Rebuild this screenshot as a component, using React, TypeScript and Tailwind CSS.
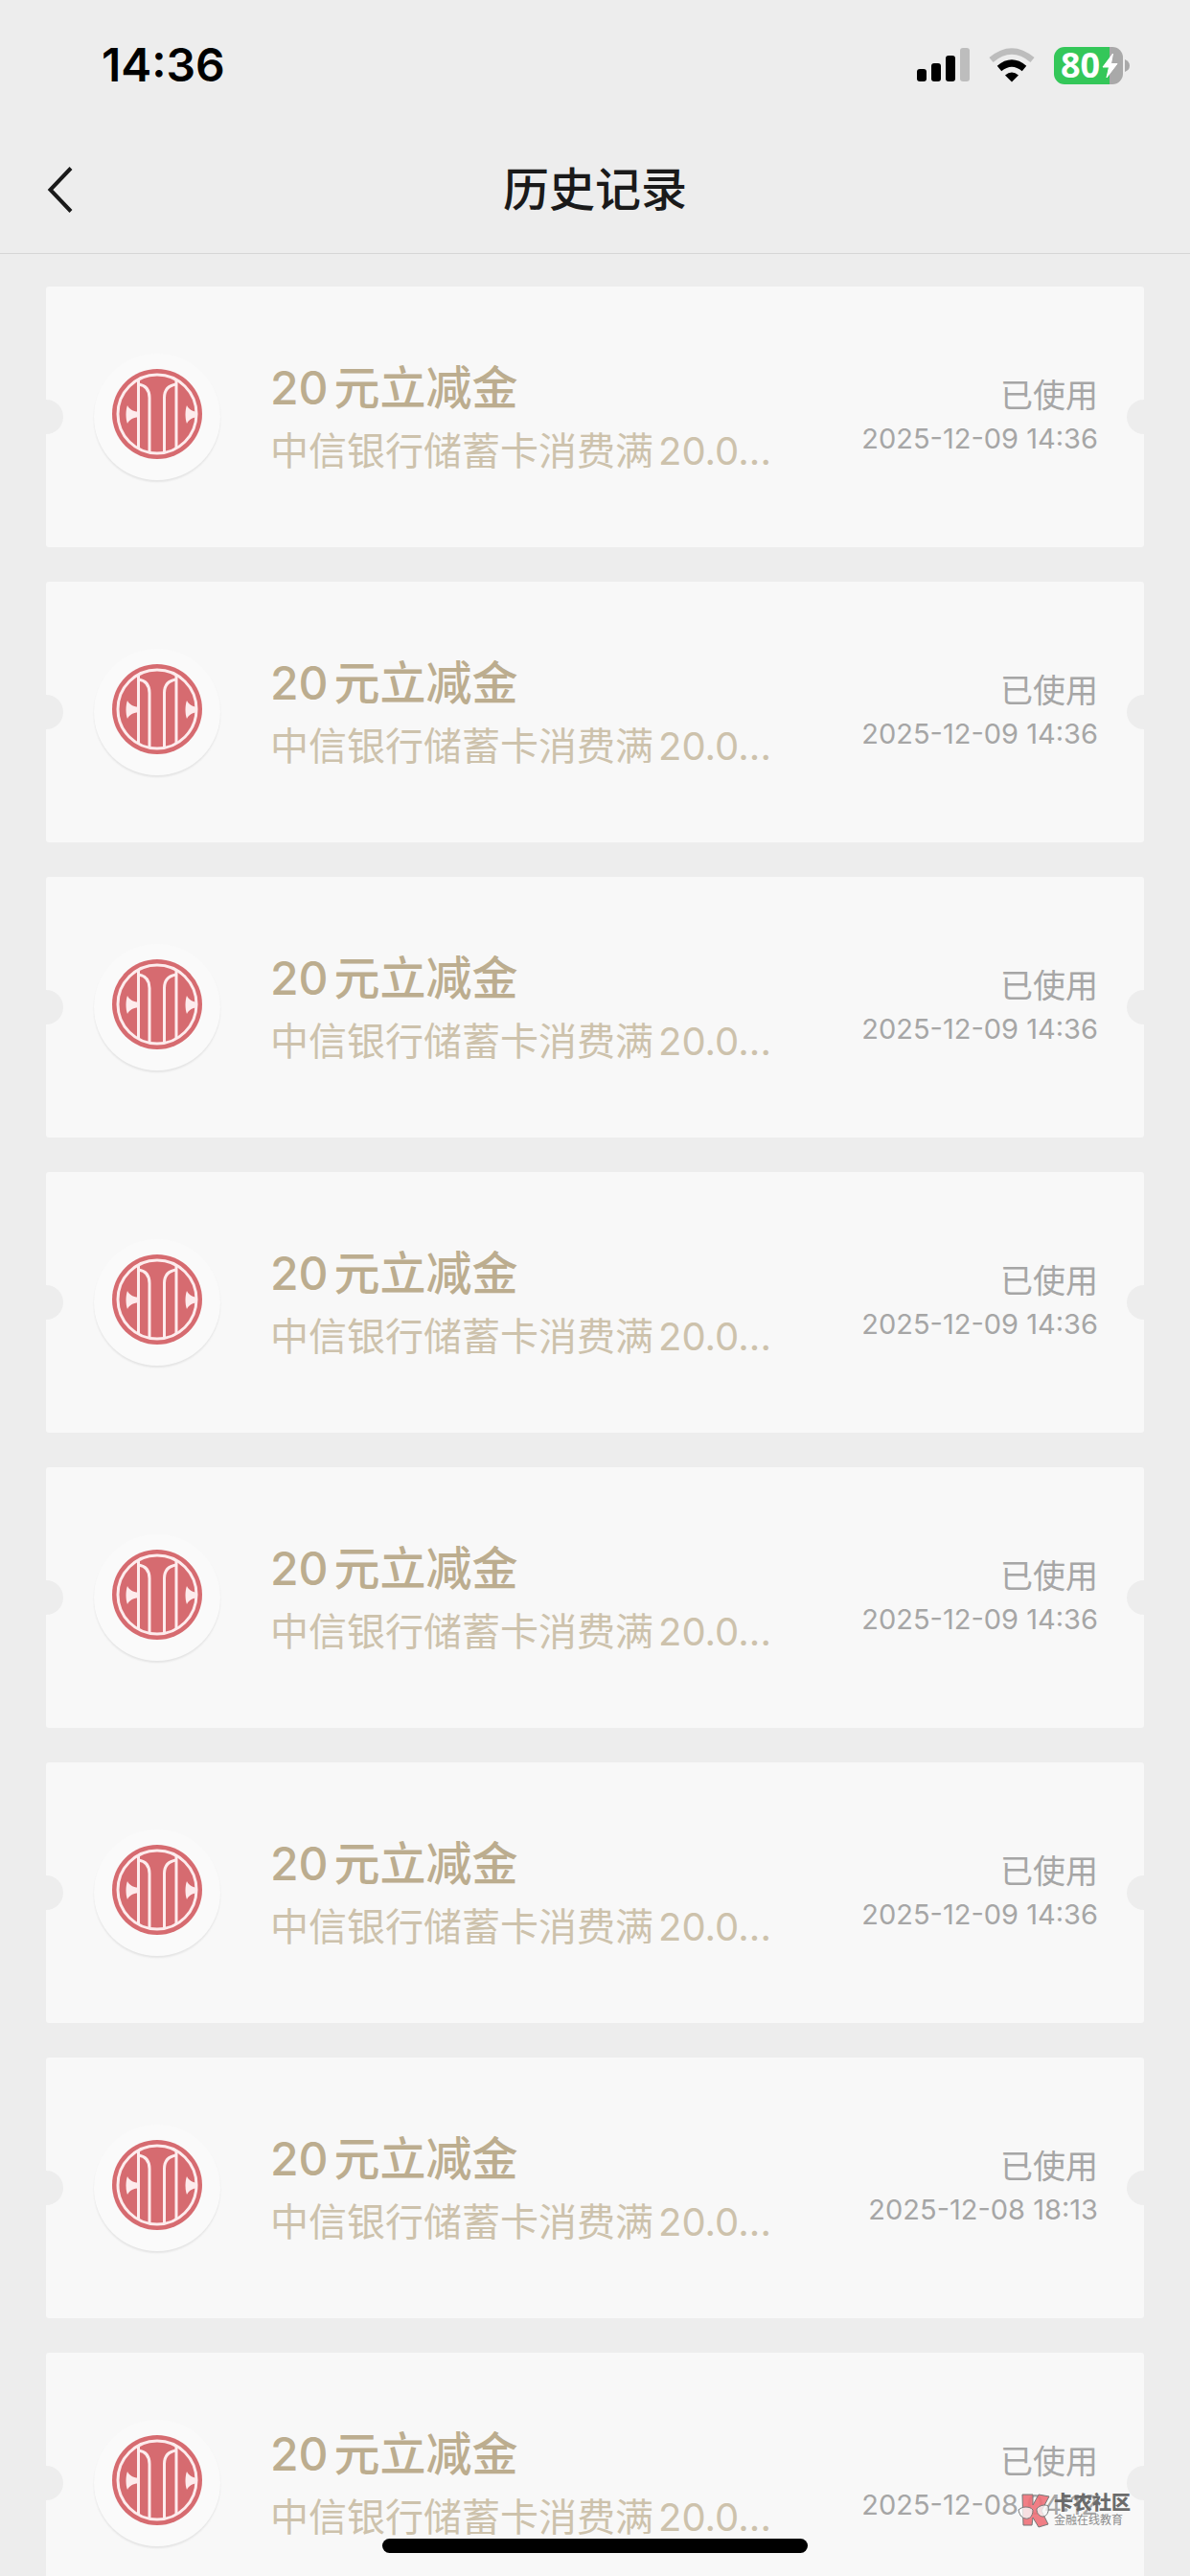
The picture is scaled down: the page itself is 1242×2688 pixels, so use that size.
import React from 'react';

interface Coupon {
    id: number;
    title: string;
    description: string;
    status: string;
    usedAt: string;
}

const usedDates = [
    '2025-12-09 14:36',
    '2025-12-09 14:36',
    '2025-12-09 14:36',
    '2025-12-09 14:36',
    '2025-12-09 14:36',
    '2025-12-09 14:36',
    '2025-12-08 18:13',
    '2025-12-08 04:12',
];

const coupons: Coupon[] = usedDates.map((usedAt, id) => ({
    id,
    title: '20元立减金',
    description: '中信银行储蓄卡消费满20.0...',
    status: '已使用',
    usedAt,
}));

// --- Status bar ---
const StatusBar = () => (
    <div className="flex h-[132px] shrink-0 items-center justify-between pl-[106px] pr-[63px] pt-1">
        <span className="text-[48px] font-semibold leading-none text-black">14:36</span>
        <div className="flex items-center">
            <svg className="h-[36px] w-[56px]" viewBox="0 0 56 36" aria-hidden="true">
                <rect x="0" y="22" width="10" height="13" rx="3" />
                <rect x="15" y="16" width="10" height="19" rx="3" />
                <rect x="30" y="8" width="10" height="27" rx="3" />
                <rect x="45" y="0" width="10" height="35" rx="3" fill="#bdbdbd" />
            </svg>
            <svg className="ml-[19px] h-[36px] w-[48px]" viewBox="0 0 48 36" aria-hidden="true">
                <path d="M24 35.5 L17 28.5 Q24 22.5 31 28.5 Z" />
                <path d="M11 21.5 Q24 10.500 37 21.5" fill="none" stroke="#000" strokeWidth="7" />
                <path d="M2.5 12.5 Q24 -5.5 45.5 12.5" fill="none" stroke="#bdbdbd" strokeWidth="6.5" />
            </svg>
            <div className="ml-[20px] flex items-center">
                <div className="flex h-[39px] w-[72px] items-center rounded-[11px] bg-[linear-gradient(to_right,#34c759_58px,#a9a9a9_58px)] pl-[7px]">
                    <span className="font-['Noto_Sans',sans-serif] text-[36px] font-bold leading-none text-white">80</span>
                    <svg className="ml-[2px] h-[27px] w-[17px]" viewBox="0 0 17 27" aria-hidden="true">
                        <path d="M11.5 1 L1 15 H7.5 L5 26 L16 11.5 H9.5 Z" fill="#fff" stroke="#fff" strokeLinejoin="round" />
                    </svg>
                </div>
                <svg className="ml-[2px] h-[13px] w-[5px]" viewBox="0 0 5 13" aria-hidden="true">
                    <path d="M0 0 Q5 2 5 6.5 Q5 11 0 13 Z" fill="#a9a9a9" />
                </svg>
            </div>
        </div>
    </div>
);

const BankLogo = () => (
    <svg className="h-[94px] w-[94px]" viewBox="0 0 94 94" role="img" aria-label="中信银行">
        <defs>
            <clipPath id="disc">
                <circle cx="47" cy="47" r="41" />
            </clipPath>
        </defs>
        <circle cx="47" cy="47" r="47" fill="#d66b70" />
        <circle cx="47" cy="47" r="41" fill="none" stroke="#fdeced" strokeWidth="3" />
        <g clipPath="url(#disc)" fill="none" stroke="#fdeced" strokeWidth="3">
            <path d="M27.5 10 V86" />
            <path d="M67 10 V86" />
            <path d="M27.5 16 C34 17 39 21 39 30 V90" />
            <path d="M67 16 C60 17 54.5 21 54.5 30 V90" />
        </g>
        <path d="M27 44.5 C22 44.5 18 42 16 38 C14 43 14 52 16 57 C18 53 22 50.5 27 50.5 Z" fill="#fdeced" />
        <path d="M88 44.5 C84 44.5 80 42 78 38 C76 43 76 52 78 57 C80 53 84 50.5 88 50.5 Z" fill="#fdeced" />
    </svg>
);

const CouponCard = ({ coupon }: { coupon: Coupon }) => (
    <li className="relative flex h-[272px] shrink-0 items-center overflow-hidden rounded-[3px] bg-[#f8f8f8] pl-[50px] pr-[48px]">
        {/* Ticket notches */}
        <span className="absolute -left-[18px] top-[118px] size-[36px] rounded-full bg-[#ededed]" />
        <span className="absolute -right-[18px] top-[118px] size-[36px] rounded-full bg-[#ededed]" />

        <div className="flex size-[132px] shrink-0 items-center justify-center rounded-full bg-[#fafafa] pb-[6px] shadow-[0_2px_2px_rgba(0,0,0,0.08)]">
            <BankLogo />
        </div>

        <div className="ml-[52px] min-w-0 flex-1 pt-[6px]">
            <h2 className="text-[48px] font-medium leading-[66px] text-[#bcad8f] [text-autospace:normal]">{coupon.title}</h2>
            <p className="whitespace-nowrap text-[40px] leading-[66px] text-[#cdc2ac] [text-autospace:normal]">{coupon.description}</p>
        </div>

        <div className="shrink-0 text-right text-[#a6a6a6]">
            <p className="text-[34px] leading-[46px]">{coupon.status}</p>
            <time className="block text-[29px] leading-[44px]">{coupon.usedAt}</time>
        </div>
    </li>
);

const Watermark = () => (
    <div className="absolute bottom-[50px] right-[62px] flex items-center gap-[4px] text-[#6b6b6b]">
        <svg className="h-[36px] w-[34px]" viewBox="0 0 34 36" aria-hidden="true">
            <path
                d="M5 1 H16 V12 L22 1 L33 3 L25 18 L32 32 L22 35 L16 25 L15 33 H6 Z"
                fill="#ee7078"
                fillOpacity="0.9"
                stroke="#777"
            />
            <path d="M1 17 C5 13 13 13 16 17 C16 24 12 27 8 26 C4 25 2 22 1 17 Z" fill="#f8f8f8" fillOpacity="0.8" stroke="#777" />
            <path d="M20 16 C23 12 29 11 32 13 C33 19 31 23 27 24 C23 24 20 21 20 16 Z" fill="#f8f8f8" fillOpacity="0.8" stroke="#777" />
        </svg>
        <div>
            <p className="text-[20px] font-black leading-[20px]">卡农社区</p>
            <p className="text-[12px] leading-[16px] text-[#8a8a8a]">金融在线教育</p>
        </div>
    </div>
);

const App = () => {
    return (
        <div
            lang="zh-CN"
            className="relative flex h-screen flex-col overflow-hidden bg-[#ededed] font-[Inter,'Noto_Sans_CJK_SC',sans-serif]"
        >
            <StatusBar />

            <header className="grid h-[133px] shrink-0 grid-cols-[1fr_auto_1fr] items-center border-b border-[#d6d6d6]">
                <button type="button" aria-label="返回" className="ml-[48px] w-[30px]">
                    <svg className="h-[50px] w-[30px]" viewBox="0 0 30 50" aria-hidden="true">
                        <path d="M26 2.5 L4.5 25 L26 47.5" fill="none" stroke="#1a1a1a" strokeWidth="4" />
                    </svg>
                </button>
                <h1 className="text-[48px] font-medium leading-none text-[#1a1a1a]">历史记录</h1>
            </header>

            <ul className="flex flex-col gap-[36px] px-[48px] pt-[34px]">
                {coupons.map((coupon) => (
                    <CouponCard key={coupon.id} coupon={coupon} />
                ))}
            </ul>

            <Watermark />
            <div className="absolute bottom-[24px] left-1/2 h-[15px] w-[444px] -translate-x-1/2 rounded-full bg-black" />
        </div>
    );
};

export default App;
